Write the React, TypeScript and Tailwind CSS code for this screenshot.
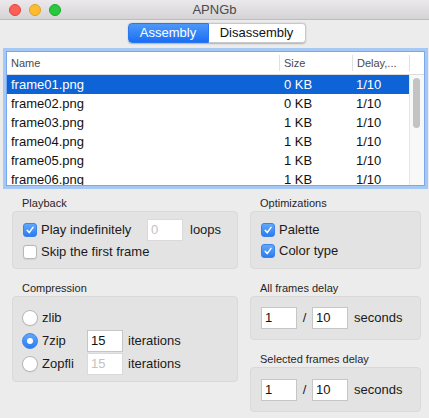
import React from "react";

function CheckBox({ checked }: { checked: boolean }) {
  if (checked) {
    return (
      <span className="w-[14px] h-[14px] rounded-[3px] bg-linear-to-b from-[#62a7fb] to-[#2a7cf2] border border-[#3a83ea] flex items-center justify-center shrink-0">
        <svg width="10" height="10" viewBox="0 0 10 10">
          <path d="M2.2 5.3 L4.2 7.6 L8 2.4" fill="none" stroke="white" strokeWidth="1.5" strokeLinecap="round" strokeLinejoin="round" />
        </svg>
      </span>
    );
  }
  return <span className="w-[14px] h-[14px] rounded-[3px] bg-white border border-[#b8b8b8] shadow-[0_0.5px_1px_rgba(0,0,0,0.08)] shrink-0" />;
}

function Radio({ checked }: { checked: boolean }) {
  if (checked) {
    return (
      <span className="w-[16px] h-[16px] rounded-full bg-linear-to-b from-[#62a7fb] to-[#2a7cf2] border border-[#3a83ea] flex items-center justify-center shrink-0">
        <span className="w-[6px] h-[6px] rounded-full bg-white" />
      </span>
    );
  }
  return <span className="w-[16px] h-[16px] rounded-full bg-white border border-[#b8b8b8] shadow-[0_0.5px_1px_rgba(0,0,0,0.08)] shrink-0" />;
}

function Field({ value, muted }: { value: string; muted?: boolean }) {
  return (
    <div
      className={
        "w-[36px] h-[22px] bg-white border flex items-center pl-[3px] text-[13px] shrink-0 " +
        (muted ? "border-[#dadada] text-[#c2c2c2]" : "border-[#c6c6c6] text-[#111]")
      }
    >
      {value}
    </div>
  );
}

function Section({ title, children, className }: { title: string; children: React.ReactNode; className?: string }) {
  return (
    <div className="flex flex-col">
      <div className="h-[14px] leading-[14px] text-[11px] text-[#262626] pl-[10px] mb-[1px]">{title}</div>
      <div className={"bg-[#e3e3e3] border border-[#d9d9d9] rounded-[4px] " + (className ?? "")}>{children}</div>
    </div>
  );
}

const rows = [
  ["frame01.png", "0 KB", "1/10"],
  ["frame02.png", "0 KB", "1/10"],
  ["frame03.png", "1 KB", "1/10"],
  ["frame04.png", "1 KB", "1/10"],
  ["frame05.png", "1 KB", "1/10"],
  ["frame06.png", "1 KB", "1/10"],
];

export default function App() {
  return (
    <div className="w-[429px] h-[418px] bg-[#ececec] flex flex-col overflow-hidden font-['Liberation_Sans',Arial,sans-serif] text-[#1a1a1a]">
      {/* Title bar */}
      <div className="h-[20px] shrink-0 bg-linear-to-b from-[#ebe9eb] to-[#d5d3d5] border-b border-[#bdbdbd] grid grid-cols-[1fr_auto_1fr] items-center">
        <div className="flex items-center gap-[8px] pl-[9px]">
          <span className="w-[12px] h-[12px] rounded-full bg-[#fc5f57] border border-[#e0443e]" />
          <span className="w-[12px] h-[12px] rounded-full bg-[#fdbc2e] border border-[#dea123]" />
          <span className="w-[12px] h-[12px] rounded-full bg-[#28c840] border border-[#1aab29]" />
        </div>
        <div className="text-[13px] text-[#4a4a4a] leading-none">APNGb</div>
        <div />
      </div>

      {/* Segmented control */}
      <div className="flex justify-center pl-[4px] mt-[3px] shrink-0">
        <div className="flex h-[20px] rounded-[4px] shadow-[0_0.5px_1.5px_rgba(0,0,0,0.25)] text-[13px]">
          <div className="w-[81px] flex items-center justify-center rounded-l-[4px] bg-linear-to-b from-[#4c98f9] to-[#1b6ef4] text-white border border-[#2c77ee]">
            Assembly
          </div>
          <div className="w-[97px] flex items-center justify-center rounded-r-[4px] bg-white text-[#111] border border-l-0 border-[#c8c8c8]">
            Disassembly
          </div>
        </div>
      </div>

      {/* Table */}
      <div className="ml-[6px] mt-[8px] w-[419px] h-[135px] shrink-0 bg-white border border-[#7aa8ec] shadow-[0_0_0_3px_#a6c8f5] flex flex-col overflow-hidden">
        <div className="h-[23px] shrink-0 border-b border-[#dcdcdc] flex items-center text-[11px] text-[#4a4a4a]">
          <div className="w-[272px] pl-[4px]">Name</div>
          <div className="w-px h-[16px] bg-[#e0e0e0]" />
          <div className="w-[72px] pl-[4px]">Size</div>
          <div className="w-px h-[16px] bg-[#e0e0e0]" />
          <div className="w-[56px] pl-[4px]">Delay,...</div>
          <div className="w-px h-[16px] bg-[#e0e0e0]" />
          <div className="flex-1" />
        </div>
        <div className="flex flex-1 overflow-hidden">
          <div className="w-[402px] flex flex-col">
            {rows.map((r, i) => (
              <div
                key={r[0]}
                className={"h-[19px] shrink-0 flex items-center text-[13px] " + (i === 0 ? "bg-[#0e63d6] text-white" : "text-[#111]")}
              >
                <div className="w-[272px] pl-[4px]">{r[0]}</div>
                <div className="w-[73px] pl-[5px]">{r[1]}</div>
                <div className="w-[57px] pl-[4px]">{r[2]}</div>
              </div>
            ))}
          </div>
          <div className="flex-1 border-l border-[#e6e6e6] bg-[#f8f8f8] pt-[3px] pl-[3px]">
            <div className="w-[7px] h-[50px] rounded-full bg-[#c3c3c3]" />
          </div>
        </div>
      </div>

      {/* Bottom panels */}
      <div className="grid grid-cols-[226px_171px] gap-x-[12px] pl-[12px] mt-[10px] text-[13px]">
        <div className="flex flex-col gap-[12px]">
          <Section title="Playback" className="h-[58px] pt-[7px] px-[10px] flex flex-col">
            <div className="h-[22px] flex items-center">
              <CheckBox checked />
              <span className="ml-[4px] w-[106px]">Play indefinitely</span>
              <Field value="0" muted />
              <span className="ml-[7px]">loops</span>
            </div>
            <div className="h-[20px] mt-[1px] flex items-center">
              <CheckBox checked={false} />
              <span className="ml-[4px]">Skip the first frame</span>
            </div>
          </Section>
          <Section title="Compression" className="h-[86px] pt-[9px] px-[9px] flex flex-col">
            <div className="h-[23px] flex items-center">
              <Radio checked={false} />
              <span className="ml-[4px]">zlib</span>
            </div>
            <div className="h-[23px] flex items-center">
              <Radio checked />
              <span className="ml-[4px] w-[45px]">7zip</span>
              <Field value="15" />
              <span className="ml-[5px]">iterations</span>
            </div>
            <div className="h-[23px] flex items-center">
              <Radio checked={false} />
              <span className="ml-[4px] w-[45px]">Zopfli</span>
              <Field value="15" muted />
              <span className="ml-[5px]">iterations</span>
            </div>
          </Section>
        </div>
        <div className="flex flex-col gap-[12px]">
          <Section title="Optimizations" className="h-[58px] px-[10px] flex flex-col justify-center gap-[7px]">
            <div className="h-[14px] flex items-center">
              <CheckBox checked />
              <span className="ml-[4px]">Palette</span>
            </div>
            <div className="h-[14px] flex items-center">
              <CheckBox checked />
              <span className="ml-[4px]">Color type</span>
            </div>
          </Section>
          <Section title="All frames delay" className="h-[44px] px-[10px] flex items-center">
            <Field value="1" />
            <span className="w-[15px] text-center">/</span>
            <Field value="10" />
            <span className="ml-[6px]">seconds</span>
          </Section>
          <Section title="Selected frames delay" className="h-[45px] px-[10px] flex items-center">
            <Field value="1" />
            <span className="w-[15px] text-center">/</span>
            <Field value="10" />
            <span className="ml-[6px]">seconds</span>
          </Section>
        </div>
      </div>
    </div>
  );
}
